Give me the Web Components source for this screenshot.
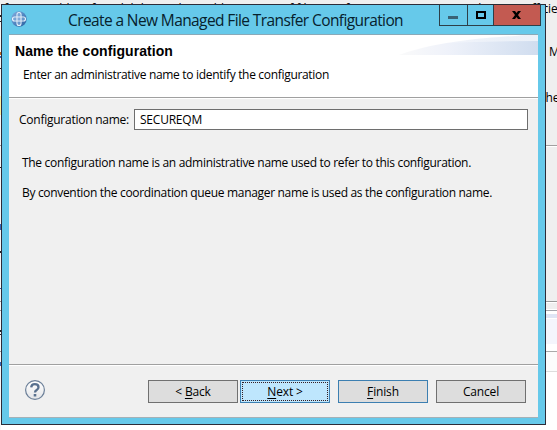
<!DOCTYPE html>
<html lang="en">
<head>
<meta charset="utf-8">
<title>Create a New Managed File Transfer Configuration</title>
<style>
html,body{margin:0;width:557px;height:430px;overflow:hidden;background:#fff;color:#000;font:12px/16px "Open Sans","Noto Sans",sans-serif}
</style>
</head>
<body>
<app-screen></app-screen>
<script>
const define=(name,html,ready)=>customElements.define(name,class extends HTMLElement{
  constructor(){super();const t=document.createElement('template');t.innerHTML=html;
    this.attachShadow({mode:'open'}).append(t.content.cloneNode(true));}
  connectedCallback(){if(ready)ready(this);}
});

/* One line of text whose tracking is adjusted to fill the width in its "w" attribute. */
define('fit-text',`<style>:host{display:block;white-space:nowrap}span{display:inline-block}</style><span><slot></slot></span>`,el=>{
  const w=+el.getAttribute('w'),s=el.shadowRoot.querySelector('span');
  const n=el.textContent.length;
  if(n)s.style.letterSpacing=((w-s.getBoundingClientRect().width)/n)+'px';
});

define('app-icon',`<style>:host{display:block;width:16px;height:16px}svg{display:block}</style>
<svg width="16" height="16" viewBox="0 0 16 16"><defs><linearGradient id="g" x1="0" y1="0" x2="1" y2="1"><stop stop-color="#86afe0"/><stop offset=".5" stop-color="#5287c2"/><stop offset="1" stop-color="#285c9c"/></linearGradient></defs>
<circle cx="8" cy="8" r="7.700" fill="url(#g)"/>
<path d="M8 1.500v13M1.500 8h13" stroke="#9fc2e8" stroke-width=".8"/>
<rect x="6" y="1.500" width="4" height="13" rx="2" fill="none" stroke="#e9f3fc" stroke-width="1.100"/><rect x="1.500" y="6" width="13" height="4" rx="2" fill="none" stroke="#e9f3fc" stroke-width="1.100"/></svg>`);

define('window-controls',`<style>:host{display:flex;flex:none;width:102px;height:22px;box-sizing:border-box;border:1px solid #2d3f48;border-top-color:#2b2b33}
div{display:flex;box-sizing:border-box;height:20px}svg{display:block}
.a{width:28px;border-right:1px solid #2d3f48}.b{width:26px;border-right:1px solid #2d3f48}.c{width:46px;background:#c35a51}</style>
<div class="a"><svg width="27" height="20"><path d="M8 11h10v3H8z" fill="#3a6275"/></svg></div>
<div class="b"><svg width="25" height="20"><path d="M9 7h8v6H9z" fill="none" stroke="#000" stroke-width="2"/></svg></div>
<div class="c"><svg width="46" height="20"><path d="M18 6h3l1.500 2L24 6h3l-3 4 3 4h-3l-1.500-2L21 14h-3l3-4z" fill="#000"/></svg></div>`);

define('title-bar',`<style>:host{display:flex;height:29px;align-items:flex-start}
app-icon{flex:none;margin:6px 0 0 9px}::slotted(fit-text){flex:none;margin:5px 0 0 41px;width:371px;font-size:15.500px;line-height:20px;color:#06212d}window-controls{margin-top:-1px}</style>
<app-icon></app-icon><slot></slot><window-controls></window-controls>`);

define('wizard-header',`<style>:host{display:flex;position:relative;box-sizing:border-box;height:64px;background:#fff;border-top:1px solid #8aa9b8;border-bottom:1px solid #a0a0a0;flex-direction:column}
svg{position:absolute;right:0;top:0}
fit-text{position:relative}
.h{margin:8px 0 0 6px;font:bold 14px/17px "Liberation Sans",sans-serif}.s{margin:7px 0 0 14px}</style>
<svg width="139" height="20"><defs><linearGradient id="w"><stop stop-color="#fafafa"/><stop offset=".35" stop-color="#eff2fa"/><stop offset="1" stop-color="#d0ddef"/></linearGradient><linearGradient id="v"><stop stop-color="#fff" stop-opacity=".2"/><stop offset="1" stop-color="#fff" stop-opacity=".6"/></linearGradient></defs><path d="M0 20Q45 3 139 0V20Z" fill="url(#w)"/><path d="M42 8Q86 1 139 0V6Q90 6 42 8Z" fill="url(#v)"/></svg>
<fit-text class="h" w="158">Name the configuration</fit-text>
<fit-text class="s" w="306">Enter an administrative name to identify the configuration</fit-text>`);

define('text-field',`<style>:host{display:flex;align-items:center;height:21px}
fit-text{width:115px;flex:none}div{box-sizing:border-box;width:394px;height:21px;background:#fff;border:1px solid #6e6e6e;padding:2px 0 0 5px}div fit-text{width:auto}</style>
<fit-text w="110">Configuration name:</fit-text><div><fit-text w="62">SECUREQM</fit-text></div>`);

define('push-button',`<style>:host{display:flex;box-sizing:border-box;width:90px;height:23px;border:1px solid #707070;background:#ddd;align-items:center;justify-content:center;position:relative;padding-top:1px;white-space:pre;letter-spacing:-.15px}
:host([blue]){border-color:#3c7fb1}:host([focused]){background:#bee6fd}
:host([focused])::after{content:"";position:absolute;inset:1px;border:1px dotted #351c20}
::slotted(u){text-underline-offset:2px;text-decoration-thickness:1px}</style><slot></slot>`);

define('help-icon',`<style>:host{display:block;width:21px;height:21px}svg{display:block}</style>
<svg width="21" height="21"><defs><linearGradient id="q" x2="0" y2="1"><stop stop-color="#fff"/><stop offset="1" stop-color="#e3e5e8"/></linearGradient></defs><circle cx="10" cy="10" r="9.400" fill="url(#q)" stroke="#6b7f98" stroke-width="1.200"/><path d="M6.200 7.400Q6.500 4.200 9.800 4.200q3.700 0 3.700 3 0 1.600-1.800 2.700-1.700 1-1.700 2.600" fill="none" stroke="#58708e" stroke-width="2.300"/><path d="M8.700 14h2.600v2.500H8.700z" fill="#58708e"/></svg>`);

define('wizard-footer',`<style>:host{display:flex;box-sizing:border-box;height:53px;border-top:1px solid #a0a0a0;box-shadow:inset 0 1px #fff;align-items:flex-start;padding:15px 0 0 16px}
push-button{flex:none}.b{margin-left:102px}.n{margin-left:2px}.f{margin-left:8px}</style>
<help-icon></help-icon>
<push-button class="b">&lt; <u>B</u>ack</push-button><push-button class="n" blue focused><u>N</u>ext &gt;</push-button><push-button class="f" blue><u>F</u>inish</push-button><push-button class="f">Cancel</push-button>`);

define('wizard-dialog',`<style>:host{display:flex;flex-direction:column;box-sizing:border-box;width:545px;height:421px;border:1px solid #2c2c38;background:#66c9ea}
.c{display:flex;flex-direction:column;margin:0 7px;width:529px;height:384px;box-sizing:border-box;background:#f0f0f0;border-bottom:1px solid #a5b1b7}
.m{height:266px;box-sizing:border-box;border-top:1px solid #fff;padding:10px 0 0 10px}
.p{margin:25px 0 0 3px}.q{margin:14px 0 0 3px}</style>
<title-bar><fit-text w="335">Create a New Managed File Transfer Configuration</fit-text></title-bar>
<div class="c"><wizard-header></wizard-header><div class="m"><text-field></text-field>
<fit-text class="p" w="449">The configuration name is an administrative name used to refer to this configuration.</fit-text>
<fit-text class="q" w="470">By convention the coordination queue manager name is used as the configuration name.</fit-text></div><wizard-footer></wizard-footer></div>`);

/* The parent window, of which only the margins round the dialog are visible. */
define('parent-window',`<style>:host{display:block;width:557px;height:430px;background:linear-gradient(#efefef 0 301px,#999 301px 302px,#fff 302px 303px,#efefef 303px 309px,#fff 309px 310px,#a3a3aa 310px 311px,#fff 311px 314px,#dfe5f5 314px 318px,#fff 318px 319px,#f4f5fc 319px 344px,#fff 344px 351px,#aaa 351px 352px,#fcfcfc 352px 371px,#ddd 371px 372px,#fff 372px)}
div{position:absolute;white-space:pre}.t{top:1px;line-height:16px}svg{position:absolute;left:0;top:0}</style>
<svg width="557" height="430"><path d="M0 5h1v425H0z" fill="#f8f8f8"/><path d="M545 145.500h12" stroke="#a0a0a0"/><path d="M545 146.500h12" stroke="#fff"/>
<path d="M0 15h1v2H0zM0 68h1v1H0zM0 21h1v1H0zM0 111h1v1H0zM0 167h1v1H0zM0 251h1v2H0zM0 330h1v2H0zM0 334h1v1H0z" fill="#222"/><path d="M0 52h1v3H0z" fill="#c66a20"/><path d="M0 56h1v2H0zM0 224h1v6H0zM0 288h1v1H0zM0 362h1v4H0z" fill="#3466b8"/><path d="M0 96h1v19H0z" fill="#fff2a0"/><path d="M0 145h1v1H0zM0 301h1v1H0zM0 310h1v1H0zM0 351h1v1H0z" fill="#999"/></svg>
<div class="t" style="left:4px">for assembly</div><div class="t" style="left:84px">of availability and possible</div><div class="t" style="left:282px">of file transfer</div><div class="t" style="left:393px">MQ</div><div class="t" style="left:469px">File trans</div>
<div class="t" style="left:525px;letter-spacing:-.1px">efficie</div>
<div style="left:549px;top:44px">M</div><div style="left:545.500px;top:90px">he</div>`);

define('app-screen',`<style>:host{display:grid;width:557px;height:430px;overflow:hidden;position:relative}
parent-window,wizard-dialog{grid-area:1/1}wizard-dialog{margin:4px 0 0 1px;position:relative}</style><parent-window></parent-window><wizard-dialog></wizard-dialog>`);
</script>
</body>
</html>
